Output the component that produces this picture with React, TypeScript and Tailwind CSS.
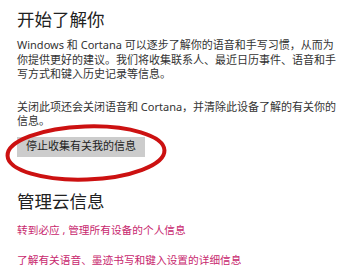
import React from 'react';

const font = { fontFamily: '"Noto Sans", "Noto Sans CJK SC", sans-serif' };

const App: React.FC = () => {
  return (
    <div className="w-[354px] h-[268px] overflow-hidden bg-white pl-[17px] pt-[7px] text-[#333]" style={font}>
      <h1 className="text-[17.5px] leading-[24px] text-[#222]">开始了解你</h1>

      <p className="mt-[7px] text-[11px] leading-[14.5px] whitespace-nowrap">
        Windows 和 Cortana 可以逐步了解你的语音和手写习惯，从而为
        <br />
        你提供更好的建议。我们将收集联系人、最近日历事件、语音和手
        <br />
        写方式和键入历史记录等信息。
      </p>

      <p className="mt-[18px] text-[11px] leading-[14.5px] whitespace-nowrap">
        关闭此项还会关闭语音和 Cortana，并清除此设备了解的有关你的
        <br />
        信息。
      </p>

      <div className="relative mt-[8px] w-[128px]">
        <button className="flex h-[20px] w-[128px] items-center justify-center bg-[#cccccc] text-[11px] text-[#222]">
          停止收集有关我的信息
        </button>
        {/* red circle drawn over the button */}
        <svg
          className="pointer-events-none absolute left-[-12px] top-[-14px]"
          width="164"
          height="60"
          viewBox="0 0 164 60"
        >
          <ellipse
            cx="81"
            cy="30"
            rx="78.5"
            ry="26.5"
            fill="none"
            stroke="#cc1111"
            strokeWidth="4"
            transform="rotate(-2 81 30)"
          />
        </svg>
      </div>

      <h2 className="mt-[32px] text-[17.5px] leading-[24px] text-[#222]">管理云信息</h2>

      <a className="mt-[10px] block text-[10.7px] leading-[14.5px] text-[#c8286e]">
        转到必应 , 管理所有设备的个人信息
      </a>
      <a className="mt-[16px] block text-[10.7px] leading-[14.5px] text-[#c8286e]">
        了解有关语音、墨迹书写和键入设置的详细信息
      </a>
    </div>
  );
};

export default App;
